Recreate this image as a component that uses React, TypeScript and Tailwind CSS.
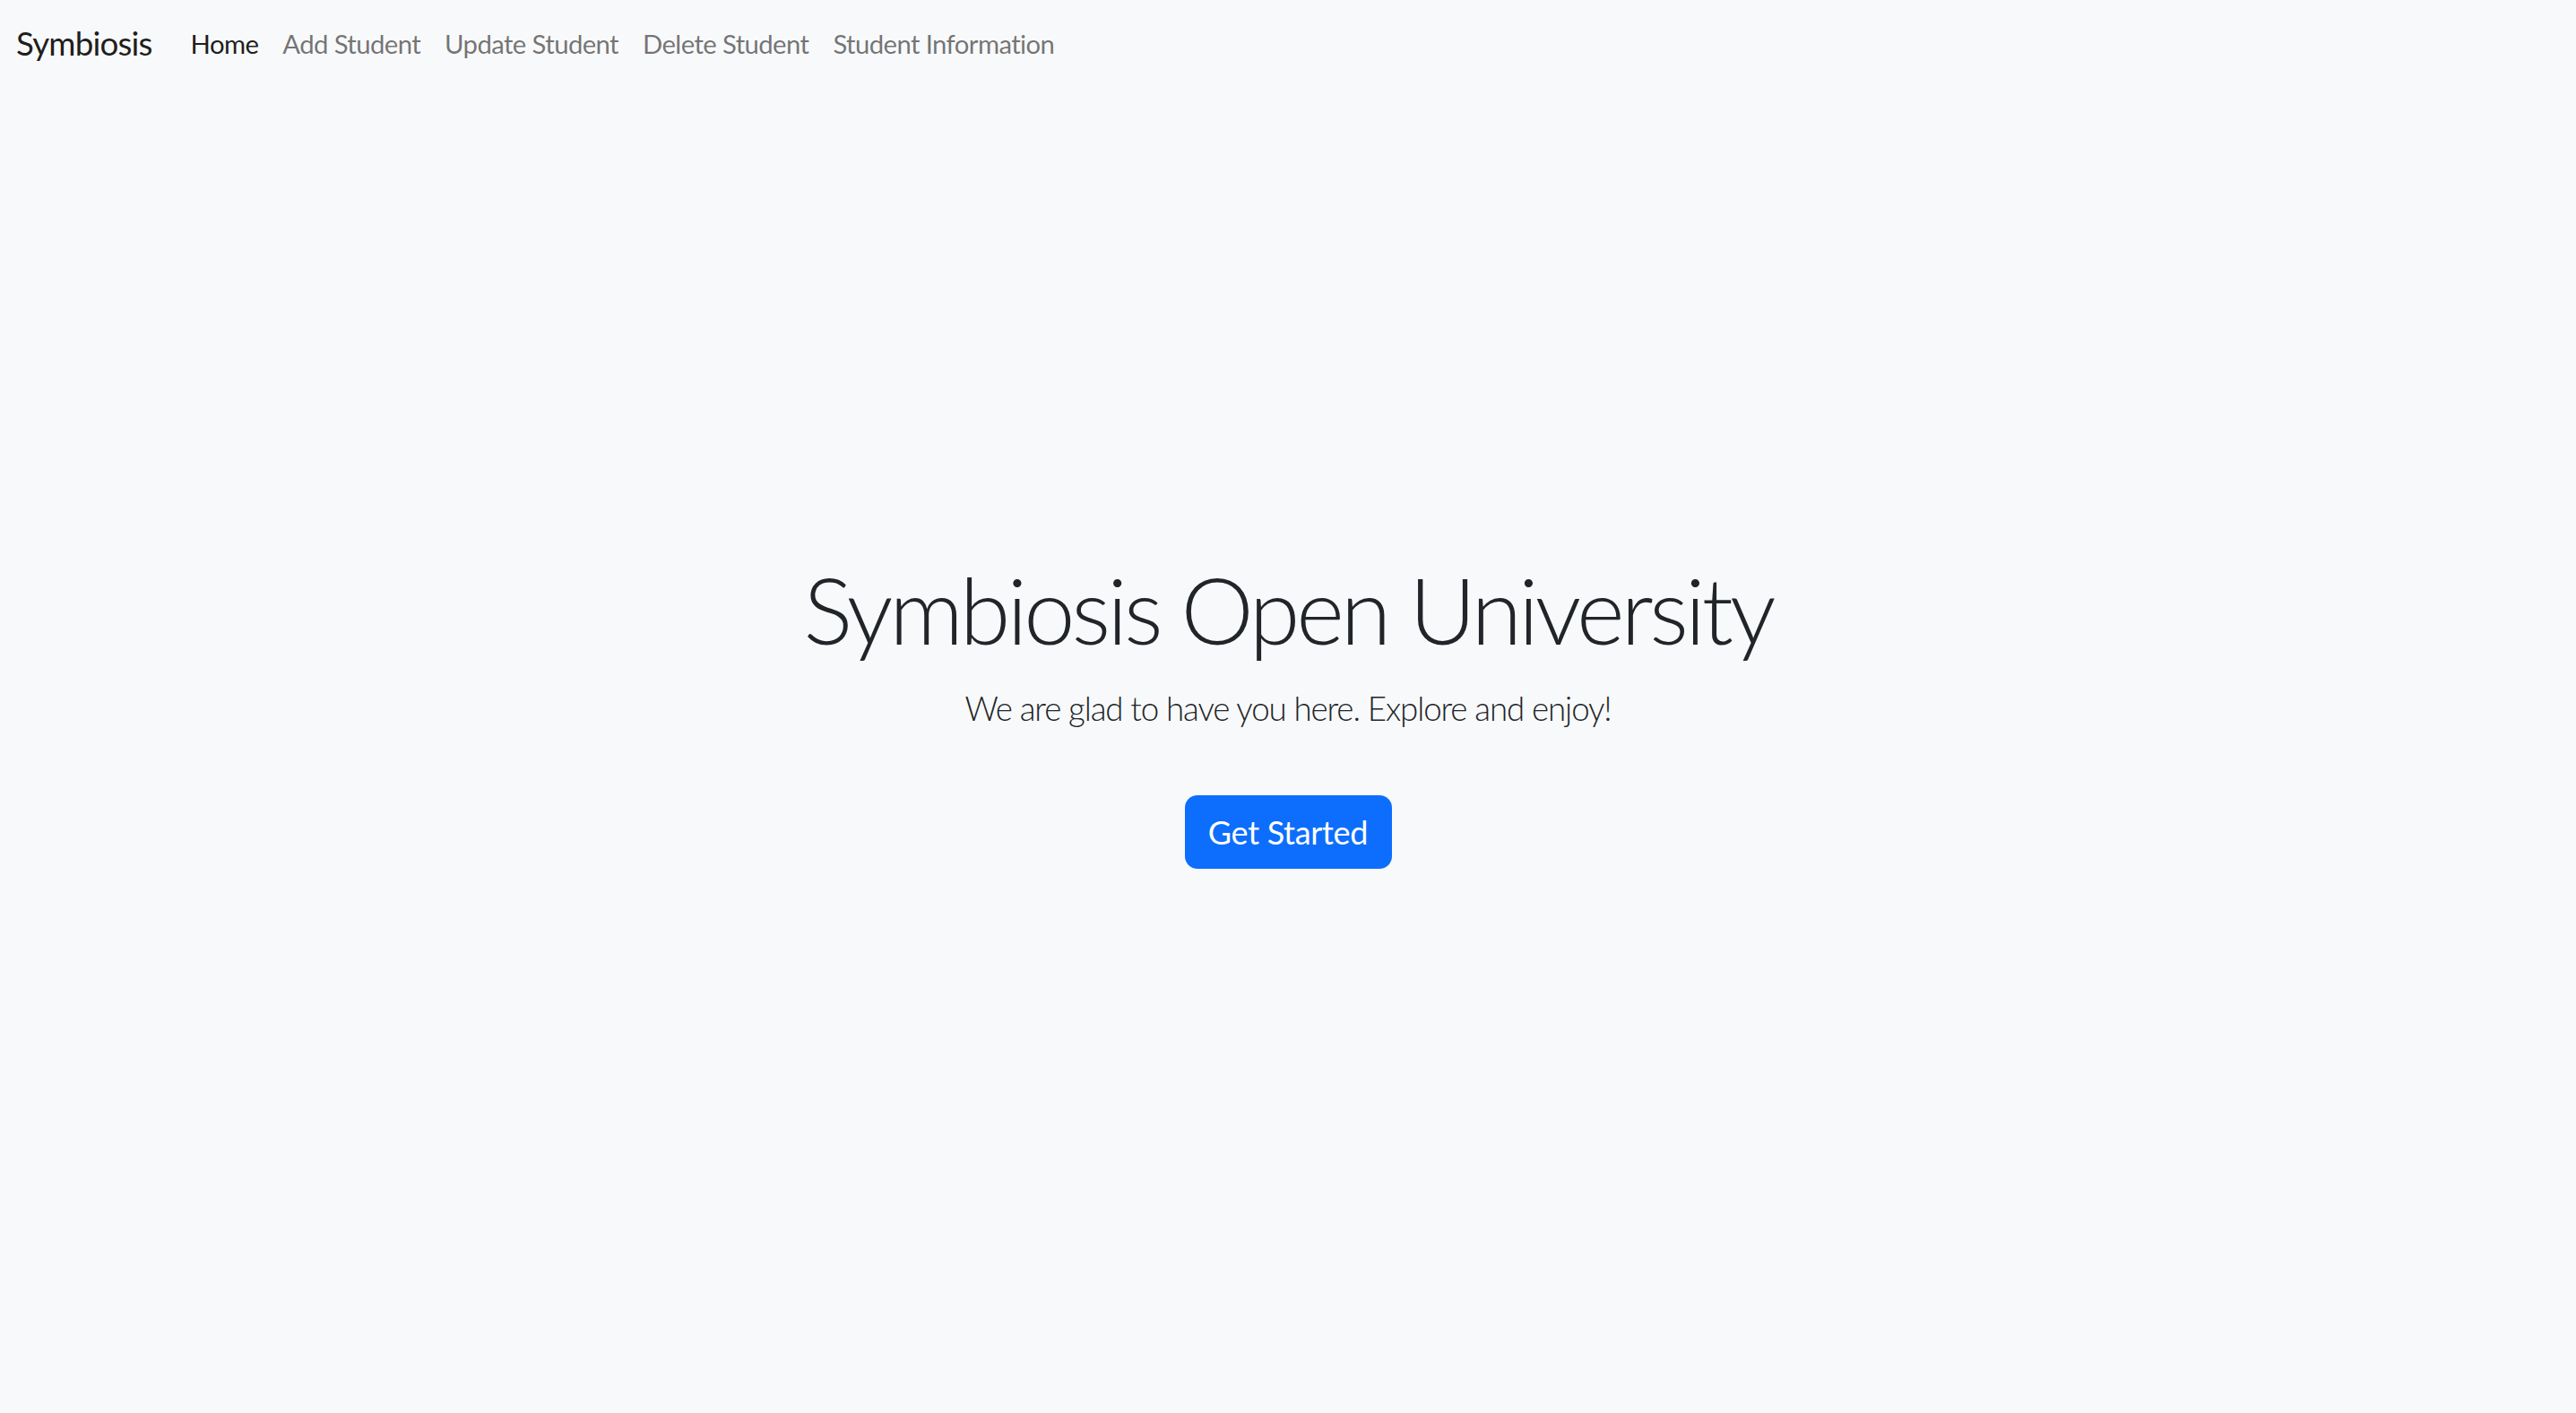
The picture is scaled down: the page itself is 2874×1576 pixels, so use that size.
export default function App() {
  const links = ["Add Student", "Update Student", "Delete Student", "Student Information"];
  return (
    <div className="min-h-screen w-full bg-[#f8f9fa] font-[family-name:Lato,sans-serif]">
      <nav className="flex h-[96px] items-center pl-[18px]">
        <a className="mr-[43px] text-[36.7px] leading-[44px] tracking-[-0.8px] text-black/90">Symbiosis</a>
        <div className="flex items-center gap-[27px]">
          <a className="text-[29.3px] leading-[35px] tracking-[-0.6px] text-black/90">Home</a>
          {links.map((l) => (
            <a key={l} className="text-[29.3px] leading-[35px] tracking-[-0.6px] text-black/55">
              {l}
            </a>
          ))}
        </div>
      </nav>
      <main className="flex flex-col items-center pt-[522px]">
        <h1 className="text-[102.7px] font-light leading-[123px] tracking-[-4px] text-[#212529]">Symbiosis Open University</h1>
        <p className="mt-[27px] text-[36.7px] font-light leading-[44px] tracking-[-1.1px] text-[#212529]">
          We are glad to have you here. Explore and enjoy!
        </p>
        <button className="mt-[75px] flex h-[82px] w-[231px] items-center justify-center rounded-[14px] bg-[#0d6efd] text-[36px] tracking-[-0.3px] text-white">
          Get Started
        </button>
      </main>
    </div>
  );
}
